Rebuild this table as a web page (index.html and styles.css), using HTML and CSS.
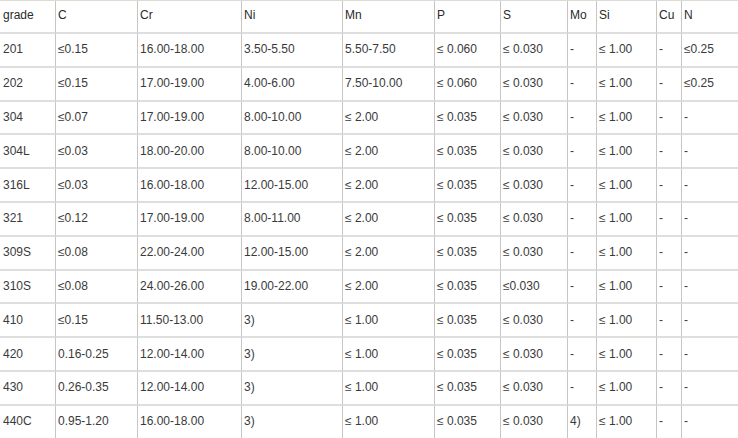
FILE: index.html
```html
<!DOCTYPE html>
<html>
<head>
<meta charset="utf-8">
<link rel="stylesheet" href="styles.css">
</head>
<body>
<div class="grid">
  <div class="c h">grade</div><div class="c h">C</div><div class="c h">Cr</div><div class="c h">Ni</div><div class="c h">Mn</div><div class="c h">P</div><div class="c h">S</div><div class="c h">Mo</div><div class="c h">Si</div><div class="c h">Cu</div><div class="c h">N</div>

  <div class="c">201</div><div class="c">≤0.15</div><div class="c">16.00-18.00</div><div class="c">3.50-5.50</div><div class="c">5.50-7.50</div><div class="c">≤ 0.060</div><div class="c">≤ 0.030</div><div class="c">-</div><div class="c">≤ 1.00</div><div class="c">-</div><div class="c">≤0.25</div>

  <div class="c">202</div><div class="c">≤0.15</div><div class="c">17.00-19.00</div><div class="c">4.00-6.00</div><div class="c">7.50-10.00</div><div class="c">≤ 0.060</div><div class="c">≤ 0.030</div><div class="c">-</div><div class="c">≤ 1.00</div><div class="c">-</div><div class="c">≤0.25</div>

  <div class="c">304</div><div class="c">≤0.07</div><div class="c">17.00-19.00</div><div class="c">8.00-10.00</div><div class="c">≤ 2.00</div><div class="c">≤ 0.035</div><div class="c">≤ 0.030</div><div class="c">-</div><div class="c">≤ 1.00</div><div class="c">-</div><div class="c">-</div>

  <div class="c">304L</div><div class="c">≤0.03</div><div class="c">18.00-20.00</div><div class="c">8.00-10.00</div><div class="c">≤ 2.00</div><div class="c">≤ 0.035</div><div class="c">≤ 0.030</div><div class="c">-</div><div class="c">≤ 1.00</div><div class="c">-</div><div class="c">-</div>

  <div class="c">316L</div><div class="c">≤0.03</div><div class="c">16.00-18.00</div><div class="c">12.00-15.00</div><div class="c">≤ 2.00</div><div class="c">≤ 0.035</div><div class="c">≤ 0.030</div><div class="c">-</div><div class="c">≤ 1.00</div><div class="c">-</div><div class="c">-</div>

  <div class="c">321</div><div class="c">≤0.12</div><div class="c">17.00-19.00</div><div class="c">8.00-11.00</div><div class="c">≤ 2.00</div><div class="c">≤ 0.035</div><div class="c">≤ 0.030</div><div class="c">-</div><div class="c">≤ 1.00</div><div class="c">-</div><div class="c">-</div>

  <div class="c">309S</div><div class="c">≤0.08</div><div class="c">22.00-24.00</div><div class="c">12.00-15.00</div><div class="c">≤ 2.00</div><div class="c">≤ 0.035</div><div class="c">≤ 0.030</div><div class="c">-</div><div class="c">≤ 1.00</div><div class="c">-</div><div class="c">-</div>

  <div class="c">310S</div><div class="c">≤0.08</div><div class="c">24.00-26.00</div><div class="c">19.00-22.00</div><div class="c">≤ 2.00</div><div class="c">≤ 0.035</div><div class="c">≤0.030</div><div class="c">-</div><div class="c">≤ 1.00</div><div class="c">-</div><div class="c">-</div>

  <div class="c">410</div><div class="c">≤0.15</div><div class="c">11.50-13.00</div><div class="c">3)</div><div class="c">≤ 1.00</div><div class="c">≤ 0.035</div><div class="c">≤ 0.030</div><div class="c">-</div><div class="c">≤ 1.00</div><div class="c">-</div><div class="c">-</div>

  <div class="c">420</div><div class="c">0.16-0.25</div><div class="c">12.00-14.00</div><div class="c">3)</div><div class="c">≤ 1.00</div><div class="c">≤ 0.035</div><div class="c">≤ 0.030</div><div class="c">-</div><div class="c">≤ 1.00</div><div class="c">-</div><div class="c">-</div>

  <div class="c">430</div><div class="c">0.26-0.35</div><div class="c">12.00-14.00</div><div class="c">3)</div><div class="c">≤ 1.00</div><div class="c">≤ 0.035</div><div class="c">≤ 0.030</div><div class="c">-</div><div class="c">≤ 1.00</div><div class="c">-</div><div class="c">-</div>

  <div class="c">440C</div><div class="c">0.95-1.20</div><div class="c">16.00-18.00</div><div class="c">3)</div><div class="c">≤ 1.00</div><div class="c">≤ 0.035</div><div class="c">≤ 0.030</div><div class="c">4)</div><div class="c">≤ 1.00</div><div class="c">-</div><div class="c">-</div>
</div>
</body>
</html>
```

FILE: styles.css
```css
html, body {
  margin: 0;
  padding: 0;
  background: #ffffff;
}

body {
  width: 738px;
  height: 438px;
  overflow: hidden;
  font-family: Arial, "Liberation Sans", sans-serif;
  font-size: 12px;
  color: #3a3a3a;
}

.grid {
  display: grid;
  grid-template-columns: 55px 82px 104px 101px 92px 66px 67px 29px 60px 25px 57px;
  grid-template-rows: 33px repeat(12, 33.8px);
  border-top: 1px solid #dcdcd4;
}

.c {
  box-sizing: border-box;
  display: flex;
  align-items: center;
  padding: 0 0 1px 2px;
  border-left: 1px solid #c6c6c6;
  border-bottom: 2px solid #dedede;
  white-space: nowrap;
  overflow: hidden;
}

.c:nth-child(11n + 1) {
  border-left: none;
  padding-left: 3px;
}

.h {
  padding-bottom: 3px;
  color: #2a2a2a;
}
```
